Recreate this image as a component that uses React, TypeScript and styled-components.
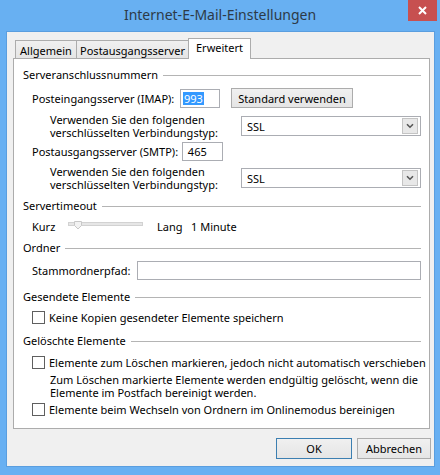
import React from 'react';
import styled, { createGlobalStyle } from 'styled-components';

const GlobalStyle = createGlobalStyle`
  html, body { margin: 0; padding: 0; background: #68B0F2; }
  body {
    font-family: "Segoe UI", "Noto Sans", "Open Sans", sans-serif;
    font-size: 11px;
    color: #000;
  }
  * { box-sizing: border-box; }
`;

const Window = styled.div`
  width: 440px;
  height: 475px;
  background: #68B0F2;
  display: flex;
  flex-direction: column;
`;

const TitleBar = styled.div`
  height: 31px;
  display: grid;
  grid-template-columns: 1fr auto 1fr;
  align-items: start;
`;

const Title = styled.div`
  grid-column: 2;
  font-size: 14px;
  line-height: 30px;
  color: #2d3a47;
`;

const CloseButton = styled.div`
  justify-self: end;
  margin-right: 3px;
  width: 29px;
  height: 21px;
  background: #C75050;
  display: flex;
  align-items: center;
  justify-content: center;
`;

const Client = styled.div`
  margin: 0 5px 8px 6px;
  flex: 1;
  background: #F0F0F0;
  border: 1px solid #5A9EDF;
  padding: 6px 4px 0 6px;
  display: flex;
  flex-direction: column;
`;

const TabRow = styled.div`
  height: 21px;
  display: flex;
  align-items: flex-end;
  padding-left: 2px;
`;

const Tab = styled.div<{ $active?: boolean; $w: number }>`
  width: ${p => p.$w}px;
  height: ${p => (p.$active ? 21 : 19)}px;
  margin-left: ${p => (p.$active ? -1 : 0)}px;
  border: 1px solid #ACACAC;
  border-left-width: ${p => (p.$active ? 1 : 0)}px;
  &:first-child { border-left-width: 1px; }
  border-bottom: ${p => (p.$active ? 'none' : '1px solid #ACACAC')};
  background: ${p => (p.$active ? '#FFFFFF' : 'linear-gradient(#F0F0F0, #E5E5E5)')};
  line-height: ${p => (p.$active ? 17 : 19)}px;
  text-align: center;
  position: ${p => (p.$active ? 'relative' : 'static')};
  z-index: ${p => (p.$active ? 1 : 'auto')};
  white-space: nowrap;
`;

const Panel = styled.div`
  margin-top: -1px;
  height: 371px;
  background: #fff;
  border: 1px solid #ACACAC;
  padding: 8px 8px 0 9px;
  display: flex;
  flex-direction: column;
`;

const GroupHeader = styled.div<{ $mt: number }>`
  height: 16px;
  line-height: 16px;
  margin-top: ${p => p.$mt}px;
  display: flex;
  align-items: center;
  gap: 5px;
  white-space: nowrap;
  &::after {
    content: '';
    flex: 1;
    height: 1px;
    background: #B4B4B4;
  }
`;

const Row = styled.div<{ $mt: number; $h: number; $indent: number }>`
  display: flex;
  align-items: center;
  height: ${p => p.$h}px;
  margin-top: ${p => p.$mt}px;
  padding-left: ${p => p.$indent}px;
  white-space: nowrap;
`;

const Label = styled.div<{ $w?: number }>`
  width: ${p => (p.$w ? `${p.$w}px` : 'auto')};
  flex: none;
`;

const TwoLine = styled.div<{ $w?: number }>`
  width: ${p => (p.$w ? `${p.$w}px` : 'auto')};
  flex: none;
  line-height: 13px;
  white-space: normal;
`;

const TextField = styled.div<{ $w?: number }>`
  height: 19px;
  width: ${p => (p.$w ? `${p.$w}px` : 'auto')};
  flex: ${p => (p.$w ? 'none' : 1)};
  border: 1px solid #ABADB3;
  background: #fff;
  display: flex;
  align-items: center;
  padding: 0 2px;
`;

const Selected = styled.span`
  background: #3399FF;
  color: #fff;
  line-height: 13px;
  padding: 0 1px;
`;

const Button = styled.div<{ $w: number; $default?: boolean }>`
  width: ${p => p.$w}px;
  height: ${p => (p.$default !== undefined ? 21 : 20)}px;
  border: 1px solid ${p => (p.$default ? '#3C7FB1' : '#ACACAC')};
  background: linear-gradient(#F0F0F0, #E5E5E5);
  display: flex;
  align-items: center;
  justify-content: center;
  flex: none;
`;

const Select = styled.div`
  flex: 1;
  height: 20px;
  border: 1px solid #ABADB3;
  background: #fff;
  display: flex;
  align-items: center;
  justify-content: space-between;
  padding: 0 2px 0 5px;
`;

const SelectArrow = styled.div`
  width: 16px;
  height: 16px;
  border: 1px solid #C4C4C4;
  background: #E8E8E8;
  display: flex;
  align-items: center;
  justify-content: center;
`;

const Slider = styled.div`
  width: 76px;
  margin-right: 13px;
  display: flex;
  align-items: center;
  flex: none;
`;

const Checkbox = styled.div`
  width: 13px;
  height: 13px;
  border: 1px solid #5F5F5F;
  background: #fff;
  margin-right: 4px;
  flex: none;
`;

const ButtonRow = styled.div`
  margin-top: 9px;
  display: flex;
  justify-content: flex-end;
  gap: 5px;
  margin-right: -1px;
`;

const Gap = styled.div<{ $w: number }>`
  width: ${p => p.$w}px;
  flex: none;
`;

const Chevron = () => (
  <svg width="8" height="6" viewBox="0 0 8 6">
    <path d="M1 1.2 L4 4.2 L7 1.2" fill="none" stroke="#555" strokeWidth="1.6" />
  </svg>
);

const DropDown: React.FC<{ value: string }> = ({ value }) => (
  <Select>
    <span>{value}</span>
    <SelectArrow>
      <Chevron />
    </SelectArrow>
  </Select>
);

export default function App() {
  return (
    <>
      <GlobalStyle />
      <Window>
        <TitleBar>
          <Title>Internet-E-Mail-Einstellungen</Title>
          <CloseButton>
            <svg width="9" height="9" viewBox="0 0 9 9">
              <path d="M1 1 L8 8 M8 1 L1 8" stroke="#fff" strokeWidth="2" />
            </svg>
          </CloseButton>
        </TitleBar>
        <Client>
          <TabRow>
            <Tab $w={62}>Allgemein</Tab>
            <Tab $w={112}>Postausgangsserver</Tab>
            <Tab $w={63} $active>Erweitert</Tab>
          </TabRow>
          <Panel>
            <GroupHeader $mt={0}>Serveranschlussnummern</GroupHeader>
            <Row $mt={5} $h={20} $indent={9}>
              <Label $w={148}>Posteingangsserver (IMAP):</Label>
              <TextField $w={40}>
                <Selected>993</Selected>
              </TextField>
              <Gap $w={11} />
              <Button $w={122}>Standard verwenden</Button>
            </Row>
            <Row $mt={5} $h={26} $indent={27}>
              <TwoLine $w={191}>
                Verwenden Sie den folgenden
                <br />
                verschlüsselten Verbindungstyp:
              </TwoLine>
              <DropDown value="SSL" />
            </Row>
            <Row $mt={3} $h={19} $indent={9}>
              <Label $w={150}>Postausgangsserver (SMTP):</Label>
              <TextField $w={41}>&nbsp;465</TextField>
            </Row>
            <Row $mt={4} $h={26} $indent={27}>
              <TwoLine $w={191}>
                Verwenden Sie den folgenden
                <br />
                verschlüsselten Verbindungstyp:
              </TwoLine>
              <DropDown value="SSL" />
            </Row>

            <GroupHeader $mt={7}>Servertimeout</GroupHeader>
            <Row $mt={4} $h={16} $indent={9}>
              <Label $w={36}>Kurz</Label>
              <Slider>
                <svg width="76" height="10" viewBox="0 0 76 10">
                  <rect x="0.5" y="1.5" width="74" height="3" fill="#E6E6E6" stroke="#D2D2D2" />
                  <path d="M6.5 0.5 H13.5 V4.5 L10 8 L6.5 4.5 Z" fill="#F2F2F2" stroke="#C8C8C8" />
                </svg>
              </Slider>
              <Label $w={34}>Lang</Label>
              <Label>1 Minute</Label>
            </Row>

            <GroupHeader $mt={6}>Ordner</GroupHeader>
            <Row $mt={5} $h={19} $indent={9}>
              <Label $w={105}>Stammordnerpfad:</Label>
              <TextField />
            </Row>

            <GroupHeader $mt={9}>Gesendete Elemente</GroupHeader>
            <Row $mt={4} $h={16} $indent={9}>
              <Checkbox />
              <Label>Keine Kopien gesendeter Elemente speichern</Label>
            </Row>

            <GroupHeader $mt={8}>Gelöschte Elemente</GroupHeader>
            <Row $mt={5} $h={16} $indent={9}>
              <Checkbox />
              <Label>Elemente zum Löschen markieren, jedoch nicht automatisch verschieben</Label>
            </Row>
            <Row $mt={3} $h={26} $indent={27}>
              <TwoLine>
                Zum Löschen markierte Elemente werden endgültig gelöscht, wenn die
                <br />
                Elemente im Postfach bereinigt werden.
              </TwoLine>
            </Row>
            <Row $mt={2} $h={16} $indent={9}>
              <Checkbox />
              <Label>Elemente beim Wechseln von Ordnern im Onlinemodus bereinigen</Label>
            </Row>
          </Panel>
          <ButtonRow>
            <Button $w={76} $default>OK</Button>
            <Button $w={74} $default={false}>Abbrechen</Button>
          </ButtonRow>
        </Client>
      </Window>
    </>
  );
}
